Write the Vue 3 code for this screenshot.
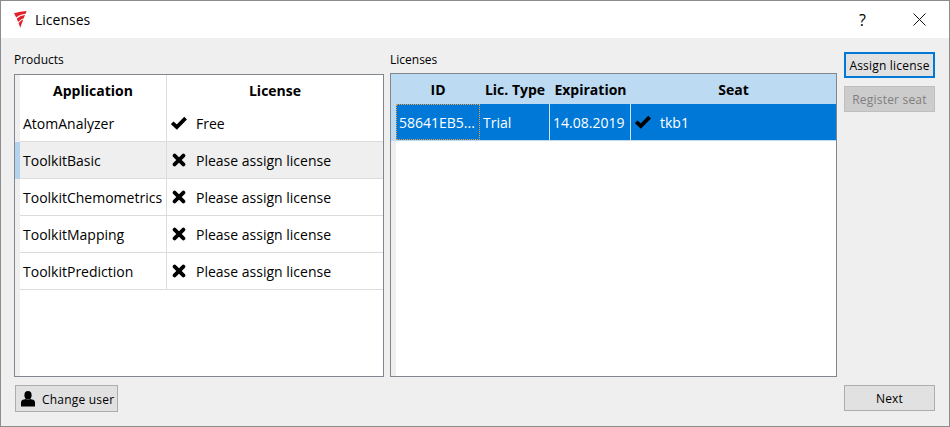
<template>
  <div class="window">
    <header class="titlebar">
      <svg class="logo" width="13" height="17" viewBox="0 0 13 17">
        <path d="M0 2.2 Q6 0.4 12.6 0 Q12 1.5 11.4 3 Q6 3 2.2 6.6 Z" fill="#e0202a" />
        <path d="M2.8 7.6 Q6.5 4.4 11 4 Q10.5 5.5 9.8 7.2 Q7 7.6 4 11 Z" fill="#e0202a" />
        <path d="M4.6 12 Q6.8 9.4 9.3 8.6 Q7.8 12.6 6.2 16.8 Z" fill="#e0202a" />
      </svg>
      <span class="title">Licenses</span>
      <span class="help">?</span>
      <svg class="close" width="13" height="13" viewBox="0 0 13 13">
        <path d="M0.5 0.5 L12.5 12.5 M12.5 0.5 L0.5 12.5" stroke="#111" stroke-width="1" fill="none" />
      </svg>
    </header>

    <main class="body">
      <section class="products">
        <div class="label">Products</div>
        <div class="table">
          <div class="strip">
            <i class="strip-head"></i>
            <i
              v-for="(p, i) in products"
              :key="p.name"
              class="strip-cell"
              :class="{ current: i === 1 }"
            ></i>
          </div>
          <div class="grid">
            <div class="row head products-cols">
              <div class="cell">Application</div>
              <div class="cell">License</div>
            </div>
            <div
              v-for="(p, i) in products"
              :key="p.name"
              class="row item products-cols"
              :class="{ current: i === 1 }"
            >
              <div class="cell">{{ p.name }}</div>
              <div class="cell status">
                <svg v-if="p.free" class="mark" width="16" height="14" viewBox="0 0 16 14">
                  <path d="M1.2 6.8 L5.8 11 L14.6 2.2" stroke="#000" stroke-width="3.8" fill="none" />
                </svg>
                <svg v-else class="mark" width="16" height="14" viewBox="0 0 16 14">
                  <path d="M3.6 2.6 L12.4 11.4 M12.4 2.6 L3.6 11.4" stroke="#000" stroke-width="3.8" stroke-linecap="round" fill="none" />
                </svg>
                <span>{{ p.free ? 'Free' : 'Please assign license' }}</span>
              </div>
            </div>
          </div>
        </div>
      </section>

      <section class="licenses">
        <div class="label">Licenses</div>
        <div class="table">
          <div class="strip">
            <i class="strip-head blue"></i>
            <i class="strip-cell lic blue"></i>
          </div>
          <div class="grid">
            <div class="row head lic-head licenses-cols">
              <div class="cell">ID</div>
              <div class="cell">Lic. Type</div>
              <div class="cell">Expiration</div>
              <div class="cell">Seat</div>
            </div>
            <div class="row selected licenses-cols">
              <div class="cell focus">58641EB5...</div>
              <div class="cell">Trial</div>
              <div class="cell">14.08.2019</div>
              <div class="cell status">
                <svg class="mark" width="16" height="14" viewBox="0 0 16 14">
                  <path d="M1.2 6.8 L5.8 11 L14.6 2.2" stroke="#000" stroke-width="3.8" fill="none" />
                </svg>
                <span>tkb1</span>
              </div>
            </div>
          </div>
        </div>
      </section>

      <aside class="actions">
        <button class="btn default">Assign license</button>
        <button class="btn disabled">Register seat</button>
      </aside>

      <div class="footer-left">
        <button class="btn user">
          <svg width="14" height="16" viewBox="0 0 14 16">
            <ellipse cx="7" cy="4.2" rx="3.6" ry="4.2" fill="#000" />
            <path d="M0 15.5 V11.5 Q0 9 3 8.6 L5 8 Q7 9.5 9 8 L11 8.6 Q14 9 14 11.5 V15.5 Z" fill="#000" />
          </svg>
          <span>Change user</span>
        </button>
      </div>
      <div class="footer-right">
        <button class="btn next">Next</button>
      </div>
    </main>
  </div>
</template>

<script setup>
const products = [
  { name: 'AtomAnalyzer', free: true },
  { name: 'ToolkitBasic', free: false },
  { name: 'ToolkitChemometrics', free: false },
  { name: 'ToolkitMapping', free: false },
  { name: 'ToolkitPrediction', free: false }
];
</script>

<style>
html, body {
  margin: 0;
  background: #efefef;
}
</style>

<style scoped>
.window {
  width: 950px;
  height: 427px;
  box-sizing: border-box;
  border: 1px solid #8c8c8c;
  display: flex;
  flex-direction: column;
  overflow: hidden;
  font-family: "Open Sans", "Noto Sans", sans-serif;
  color: #000;
  background: #efefef;
}

.titlebar {
  height: 37px;
  flex: none;
  background: #fff;
  display: flex;
  align-items: center;
  padding-left: 13px;
}

.logo {
  margin-right: 8px;
}

.title {
  font-size: 14px;
}

.help {
  margin-left: auto;
  margin-right: 47px;
  font-size: 16px;
}

.close {
  margin-right: 23px;
}

.body {
  flex: 1;
  display: grid;
  grid-template-columns: 370px 447px 91px;
  grid-template-rows: 339px 1fr;
  column-gap: 6px;
  padding: 0 13px 0 13px;
}

.products,
.licenses {
  display: flex;
  flex-direction: column;
}

.label {
  font-size: 12px;
  line-height: 16px;
  padding-top: 14px;
  flex: none;
}

.products .label {
  height: 22px;
}

.licenses .label {
  height: 21px;
}

.table {
  flex: 1;
  display: flex;
  border: 1px solid #82878f;
  background: #fff;
  min-height: 0;
}

.strip {
  width: 5px;
  flex: none;
  background: #efefef;
  display: flex;
  flex-direction: column;
}

.strip i {
  display: block;
}

.strip-head {
  height: 30px;
}

.strip-cell {
  height: 37px;
}

.strip-cell.current {
  background: #b4d3ee;
}

.blue {
  background: #bcdaf2;
}

.grid {
  flex: 1;
  min-width: 0;
}

.row {
  display: grid;
}

.products-cols {
  grid-template-columns: 147px 1fr;
}

.licenses-cols {
  grid-template-columns: 84px 70px 81px 1fr;
}

.cell {
  font-size: 14px;
  padding-left: 3px;
  display: flex;
  align-items: center;
  white-space: nowrap;
  overflow: hidden;
}

.head {
  height: 30px;
}

.head .cell {
  font-weight: 700;
  justify-content: center;
  padding-left: 0;
  padding-top: 1px;
}

.products-cols.head .cell:first-child {
  border-right: 1px solid #dcdcdc;
}

.lic-head {
  background: #bcdaf2;
}

.item {
  height: 37px;
  box-sizing: border-box;
  border-bottom: 1px solid #dcdcdc;
}

.item .cell:first-child {
  border-right: 1px solid #dcdcdc;
}

.item.current {
  background: #efefef;
}

.selected {
  height: 37px;
  background: #0078d7;
  color: #fff;
  box-sizing: border-box;
  border-bottom: 1px solid #bcdaf2;
}

.selected .cell {
  border-right: 1px solid #cfe3f5;
}

.selected .cell:last-child {
  border-right: none;
}

.selected .focus {
  border: 1px dotted #f0a040;
  padding-left: 2px;
}

.status {
  padding-left: 4px;
}

.mark {
  flex: none;
  margin-right: 9px;
}

.actions {
  margin-left: 1px;
  display: flex;
  flex-direction: column;
  gap: 8px;
  padding-top: 14px;
}

.btn {
  box-sizing: border-box;
  width: 91px;
  height: 26px;
  padding: 0;
  font-family: inherit;
  font-size: 12px;
  letter-spacing: 0.2px;
  color: #000;
  background: #e1e1e1;
  border: 1px solid #adadad;
}

.btn.default {
  border: 2px solid #0078d7;
}

.btn.disabled {
  background: #cccccc;
  border-color: #bfbfbf;
  color: #7f7f7f;
}

.footer-left {
  padding-top: 8px;
  padding-left: 1px;
}

.btn.user {
  width: 103px;
  height: 27px;
  display: flex;
  align-items: center;
  gap: 7px;
  padding-left: 5px;
}

.btn.user span {
  padding-top: 1px;
}

.footer-right {
  margin-left: 1px;
  grid-column: 3;
  padding-top: 8px;
}
</style>
